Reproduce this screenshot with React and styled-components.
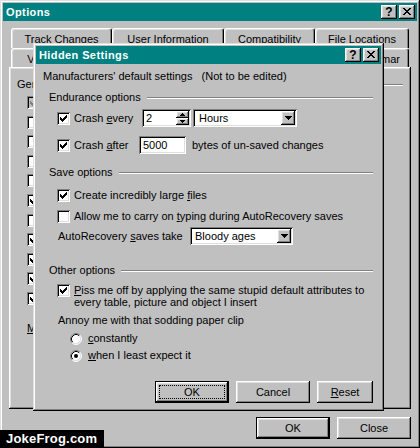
import React from 'react';
import styled, { createGlobalStyle, css } from 'styled-components';

const GlobalStyle = createGlobalStyle`
  html, body {
    margin: 0;
    padding: 0;
    background: #c0c0c0;
  }
  body {
    font-family: "Liberation Sans", Arial, sans-serif;
    font-size: 11px;
    color: #000;
  }
`;

// win98 bevels
const frame = css`
  box-shadow: inset -1px -1px #000, inset 1px 1px #dfdfdf,
    inset -2px -2px #808080, inset 2px 2px #fff;
`;
const raised = css`
  box-shadow: inset -1px -1px #000, inset 1px 1px #fff,
    inset -2px -2px #808080, inset 2px 2px #dfdfdf;
`;
const sunken = css`
  box-shadow: inset 1px 1px #808080, inset -1px -1px #fff,
    inset 2px 2px #000, inset -2px -2px #dfdfdf;
`;

const Screen = styled.div`
  position: relative;
  width: 420px;
  height: 448px;
  overflow: hidden;
`;

const Window = styled.div`
  box-sizing: border-box;
  display: flex;
  flex-direction: column;
  width: ${p => p.$w}px;
  height: ${p => p.$h}px;
  padding: 3px;
  background: #c0c0c0;
  ${frame}
`;

const FloatingWindow = styled(Window)`
  position: absolute;
  left: ${p => p.$x}px;
  top: ${p => p.$y}px;
`;

const TitleBar = styled.div`
  flex: none;
  display: flex;
  align-items: center;
  height: 18px;
  padding: 0 2px 0 3px;
  background: #008080;
  color: #fff;
  font-weight: bold;
  letter-spacing: 0.4px;
`;

const Title = styled.span`
  flex: 1;
`;

const Controls = styled.div`
  display: flex;
  gap: 2px;
`;

const ControlButton = styled.span`
  box-sizing: border-box;
  display: flex;
  align-items: center;
  justify-content: center;
  width: 16px;
  height: 14px;
  padding-bottom: 1px;
  background: #c0c0c0;
  color: #000;
  font-size: 12px;
  font-weight: bold;
  letter-spacing: 0;
  ${raised}
`;

const TabRow = styled.div`
  flex: none;
  display: flex;
  height: ${p => p.$h}px;
  margin-top: ${p => p.$mt || 0}px;
  padding-left: 8px;
`;

const Tab = styled.div`
  box-sizing: border-box;
  width: ${p => p.$w}px;
  padding-top: 4px;
  line-height: 13px;
  text-align: center;
  white-space: nowrap;
  overflow: hidden;
  border: 1px solid #fff;
  border-bottom: 0;
  border-right-color: #000;
  border-radius: 3px 3px 0 0;
  box-shadow: inset -1px 0 #808080, inset 1px 1px #dfdfdf;
`;

const Panel = styled.div`
  flex: 1;
  display: flex;
  flex-direction: column;
  margin: 0 6px;
  padding: 11px 8px 0;
  ${raised}
`;

const SectionHead = styled.div`
  display: flex;
  align-items: center;
  gap: 6px;
  margin: ${p => p.$mt || 0}px 0 0 ${p => p.$ml || 0}px;
  line-height: 13px;
  white-space: nowrap;

  &::after {
    content: '';
    flex: 1;
    border-top: 1px solid #808080;
    border-bottom: 1px solid #fff;
  }
`;

const CheckList = styled.div`
  display: flex;
  flex-direction: column;
  gap: 6.6px;
  margin: 5px 0 0 10px;
`;

const Box = styled.span`
  box-sizing: border-box;
  flex: none;
  display: flex;
  align-items: center;
  justify-content: center;
  width: 13px;
  height: 13px;
  background: ${p => (p.$disabled ? '#c0c0c0' : '#fff')};
  ${sunken}
`;

const Text = styled.div`
  margin: ${p => p.$mt || 0}px 0 0 ${p => p.$ml || 0}px;
  line-height: 13px;
  white-space: pre;
`;

const Body = styled.div`
  flex: 1;
  display: flex;
  flex-direction: column;
  padding: 0 8px 0 7px;
`;

const Row = styled.div`
  flex: none;
  display: flex;
  align-items: ${p => (p.$top ? 'flex-start' : 'center')};
  height: ${p => p.$h}px;
  margin: ${p => p.$mt || 0}px 0 0 ${p => p.$ml || 0}px;
`;

const Label = styled.span`
  flex: none;
  width: ${p => (p.$w ? `${p.$w}px` : 'auto')};
  margin-left: ${p => p.$gap || 0}px;
  line-height: ${p => p.$lh || 13}px;
  white-space: nowrap;
`;

const Field = styled.div`
  box-sizing: border-box;
  flex: none;
  display: flex;
  align-items: center;
  width: ${p => p.$w}px;
  height: 18px;
  margin-left: ${p => p.$gap || 0}px;
  padding: 2px 2px 2px ${p => p.$pl || 4}px;
  background: #fff;
  ${sunken}
`;

const FieldValue = styled.span`
  flex: 1;
  white-space: nowrap;
`;

const Spinner = styled.div`
  display: flex;
  flex-direction: column;
  width: 13px;
  height: 14px;
`;

const SpinButton = styled.span`
  box-sizing: border-box;
  flex: 1;
  display: flex;
  align-items: center;
  justify-content: center;
  background: #c0c0c0;
  ${raised}
`;

const DropButton = styled.span`
  box-sizing: border-box;
  display: flex;
  align-items: center;
  justify-content: center;
  width: 14px;
  height: 14px;
  background: #c0c0c0;
  ${raised}
`;

const RadioIcon = styled.svg`
  flex: none;
  display: block;
`;

const ButtonRow = styled.div`
  flex: none;
  display: flex;
  justify-content: flex-end;
  gap: 7px;
  margin: ${p => p.$mt || 0}px ${p => p.$mr || 0}px ${p => p.$mb || 0}px 0;
`;

const Button = styled.button`
  position: relative;
  box-sizing: border-box;
  width: ${p => p.$w}px;
  height: 22px;
  padding: 0;
  border: 0;
  background: #c0c0c0;
  color: #000;
  font: inherit;
  ${raised}

  ${p =>
    p.$default &&
    css`
      box-shadow: inset 0 0 0 1px #000, inset -2px -2px #000, inset 2px 2px #fff,
        inset -3px -3px #808080, inset 3px 3px #dfdfdf;
    `}

  ${p =>
    p.$focus &&
    css`
      &::after {
        content: '';
        position: absolute;
        inset: 4px;
        border: 1px dotted #000;
      }
    `}
`;

const Watermark = styled.div`
  position: absolute;
  left: 0;
  bottom: 0;
  width: 104px;
  height: 18px;
  padding-left: 6px;
  box-sizing: border-box;
  background: #000;
  color: #fff;
  font-size: 13px;
  font-weight: bold;
  line-height: 18px;
  letter-spacing: 0.2px;
`;

const CheckMark = ({ color = '#000' }) => (
  <svg width="7" height="7" viewBox="0 0 7 7" shapeRendering="crispEdges">
    <path
      fill={color}
      d="M6 0h1v1H6zM5 1h2v1H5zM0 2h1v1H0zM4 2h3v1H4zM0 3h2v1H0zM3 3h3v1H3zM0 4h5v1H0zM1 5h3v1H1zM2 6h1v1H2z"
    />
  </svg>
);

const Checkbox = ({ checked, disabled }) => (
  <Box $disabled={disabled}>{checked && <CheckMark color={disabled ? '#808080' : '#000'} />}</Box>
);

const CloseGlyph = () => (
  <svg width="8" height="7" viewBox="0 0 8 7" shapeRendering="crispEdges">
    <path d="M0 0h2v1H0zM6 0h2v1H6zM1 1h2v1H1zM5 1h2v1H5zM2 2h4v1H2zM3 3h2v1H3zM2 4h4v1H2zM1 5h2v1H1zM5 5h2v1H5zM0 6h2v1H0zM6 6h2v1H6z" />
  </svg>
);

const ArrowUp = () => (
  <svg width="5" height="3" viewBox="0 0 5 3" shapeRendering="crispEdges">
    <path d="M2 0h1v1H2zM1 1h3v1H1zM0 2h5v1H0z" />
  </svg>
);

const ArrowDown = ({ wide }) =>
  wide ? (
    <svg width="7" height="4" viewBox="0 0 7 4" shapeRendering="crispEdges">
      <path d="M0 0h7v1H0zM1 1h5v1H1zM2 2h3v1H2zM3 3h1v1H3z" />
    </svg>
  ) : (
    <svg width="5" height="3" viewBox="0 0 5 3" shapeRendering="crispEdges">
      <path d="M0 0h5v1H0zM1 1h3v1H1zM2 2h1v1H2z" />
    </svg>
  );

const Radio = ({ checked }) => (
  <RadioIcon width="12" height="12" viewBox="0 0 12 12">
    <circle cx="6" cy="6" r="5" fill="#fff" />
    <path d="M2.11 9.89A5.5 5.5 0 0 1 9.89 2.11" stroke="#808080" fill="none" />
    <path d="M9.89 2.11A5.5 5.5 0 0 1 2.11 9.89" stroke="#fff" fill="none" />
    <path d="M2.82 9.18A4.5 4.5 0 0 1 9.18 2.82" stroke="#000" fill="none" />
    <path d="M9.18 2.82A4.5 4.5 0 0 1 2.82 9.18" stroke="#dfdfdf" fill="none" />
    {checked && <circle cx="6" cy="6" r="2" fill="#000" />}
  </RadioIcon>
);

const TitleControls = () => (
  <Controls>
    <ControlButton>?</ControlButton>
    <ControlButton>
      <CloseGlyph />
    </ControlButton>
  </Controls>
);

const backTabs = [
  ['Track Changes', 101],
  ['User Information', 112],
  ['Compatibility', 91],
  ['File Locations', 94],
];

// front row: only the outer two labels peek out from under the hidden dialog
const frontTabs = [
  ['View', 56],
  ['', 67],
  ['', 50],
  ['', 52],
  ['', 56],
  ['Spelling & Grammar', 117],
];

const generalChecks = [
  { checked: true, disabled: true },
  {},
  {},
  {},
  {},
  { checked: true },
  {},
  { checked: true },
  { checked: true },
  { checked: true },
  { checked: true },
];

const App = () => {
  return (
    <>
      <GlobalStyle />
      <Screen>
        <Window $w={420} $h={448}>
          <TitleBar>
            <Title>Options</Title>
            <TitleControls />
          </TitleBar>

          <TabRow $h={20} $mt={7}>
            {backTabs.map(([name, w]) => (
              <Tab key={name} $w={w}>
                {name}
              </Tab>
            ))}
          </TabRow>
          <TabRow $h={19}>
            {frontTabs.map(([name, w], i) => (
              <Tab key={i} $w={w}>
                {name}
              </Tab>
            ))}
          </TabRow>

          <Panel>
            <SectionHead>General options</SectionHead>
            <CheckList>
              {generalChecks.map((c, i) => (
                <Checkbox key={i} checked={c.checked} disabled={c.disabled} />
              ))}
            </CheckList>
            <Text $mt={17} $ml={10}>
              <u>M</u>easurement units:
            </Text>
          </Panel>

          <ButtonRow $mt={8} $mr={6} $mb={6}>
            <Button $w={74} $default>OK</Button>
            <Button $w={74}>Close</Button>
          </ButtonRow>
        </Window>

        <FloatingWindow $x={33} $y={43} $w={351} $h={368}>
          <TitleBar>
            <Title>Hidden Settings</Title>
            <TitleControls />
          </TitleBar>

          <Body>
            <Text $mt={6}>Manufacturers' default settings   (Not to be edited)</Text>

            <SectionHead $mt={8} $ml={6}>Endurance options</SectionHead>
            <Row $h={18} $mt={5} $ml={14}>
              <Checkbox checked />
              <Label $gap={4} $w={68}>
                Crash <u>e</u>very
              </Label>
              <Field $w={49} $pl={4}>
                <FieldValue>2</FieldValue>
                <Spinner>
                  <SpinButton>
                    <ArrowUp />
                  </SpinButton>
                  <SpinButton>
                    <ArrowDown />
                  </SpinButton>
                </Spinner>
              </Field>
              <Field $w={104} $gap={2} $pl={6}>
                <FieldValue>Hours</FieldValue>
                <DropButton>
                  <ArrowDown wide />
                </DropButton>
              </Field>
            </Row>
            <Row $h={18} $mt={9} $ml={14}>
              <Checkbox checked />
              <Label $gap={4} $w={65}>
                Crash <u>a</u>fter
              </Label>
              <Field $w={47} $pl={4}>
                <FieldValue>5000</FieldValue>
              </Field>
              <Label $gap={6}>bytes of un-saved changes</Label>
            </Row>

            <SectionHead $mt={12} $ml={6}>Save options</SectionHead>
            <Row $h={13} $mt={10} $ml={14}>
              <Checkbox checked />
              <Label $gap={4}>
                Create incredibly large <u>f</u>iles
              </Label>
            </Row>
            <Row $h={13} $mt={8} $ml={14}>
              <Checkbox />
              <Label $gap={4}>
                Allow me to carry on <u>t</u>yping during AutoRecovery saves
              </Label>
            </Row>
            <Row $h={18} $mt={4} $ml={15}>
              <Label $w={132}>
                AutoRecovery <u>s</u>aves take
              </Label>
              <Field $w={103} $pl={5}>
                <FieldValue>Bloody ages</FieldValue>
                <DropButton>
                  <ArrowDown wide />
                </DropButton>
              </Field>
            </Row>

            <SectionHead $mt={19} $ml={6}>Other options</SectionHead>
            <Row $h={24} $mt={7} $ml={14} $top>
              <Checkbox checked />
              <Label $gap={4} $lh={12}>
                <u>P</u>iss me off by applying the same stupid default attributes to
                <br />
                every table, picture and object I insert
              </Label>
            </Row>
            <Text $mt={6} $ml={15}>
              Annoy me with that sodding paper clip
            </Text>
            <Row $h={13} $mt={5} $ml={27}>
              <Radio />
              <Label $gap={6}>
                <u>c</u>onstantly
              </Label>
            </Row>
            <Row $h={13} $mt={4} $ml={27}>
              <Radio checked />
              <Label $gap={6}>
                <u>w</u>hen I least expect it
              </Label>
            </Row>

            <ButtonRow $mt={19} $mr={0}>
              <Button $w={74} $default $focus>
                OK
              </Button>
              <Button $w={74}>Cancel</Button>
              <Button $w={56}>
                <u>R</u>eset
              </Button>
            </ButtonRow>
          </Body>
        </FloatingWindow>

        <Watermark>JokeFrog.com</Watermark>
      </Screen>
    </>
  );
};

export default App;
